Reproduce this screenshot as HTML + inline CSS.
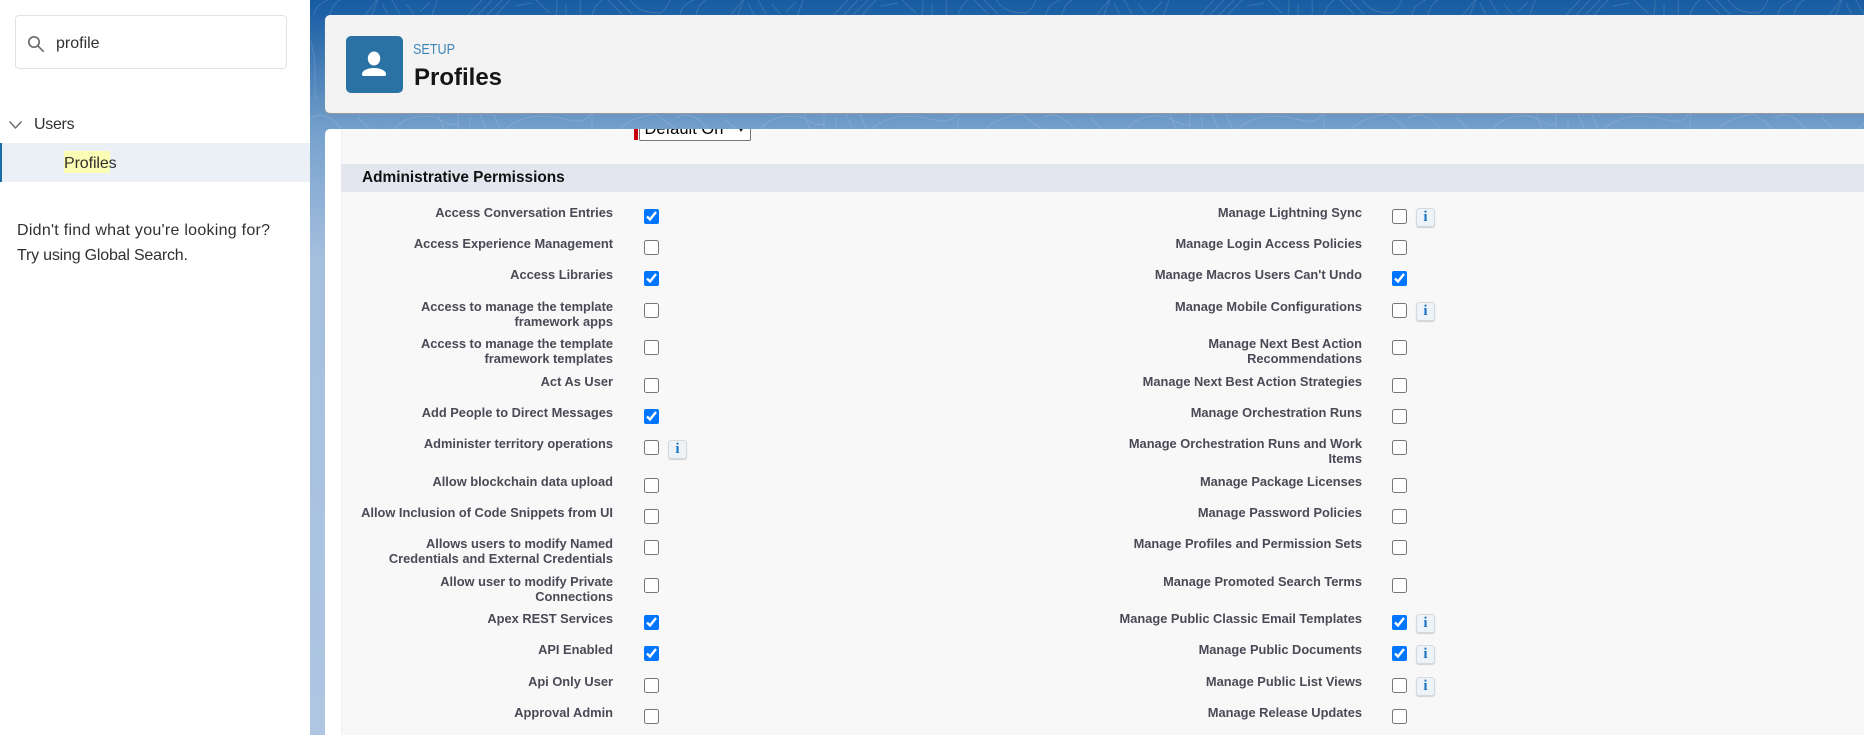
<!DOCTYPE html>
<html lang="en">
<head>
<meta charset="utf-8">
<title>Profiles</title>
<style>
html,body{margin:0;padding:0;width:1864px;height:735px;overflow:hidden;background:#fff}
body{position:relative;font-family:"Liberation Sans",Arial,sans-serif}
#bg{position:absolute;left:310px;top:0;width:1554px;height:735px;background:linear-gradient(#175ca2 0,#1f62a6 16px,#6a98c6 116px,#78a2cd 135px,#a5bfde 260px,#aec6e2 735px)}
#bg svg{position:absolute;left:0;top:0}
#side{position:absolute;left:0;top:0;width:310px;height:735px;background:#fff}
#search{position:absolute;left:15px;top:15px;width:270px;height:52px;border:1px solid #e2e2e2;border-radius:4px;background:#fff}
.st{position:absolute;white-space:nowrap;color:#303030;font-size:16px;line-height:20px}
#sel{position:absolute;left:0;top:143px;width:310px;height:39px;background:#ebf0f6}
#bar{position:absolute;left:0;top:143px;width:2px;height:39px;background:#1b6ba4}
#hl{position:absolute;left:64px;top:151px;width:46px;height:22px;background:#fbfdb4}
#head{position:absolute;left:325px;top:15px;width:1560px;height:98px;background:#f3f3f3;border-radius:5px;box-shadow:0 1px 1px #9a9a9a}
#ico{position:absolute;left:346px;top:36px;width:57px;height:57px;border-radius:5px;background:#2a72a3}
#card{position:absolute;left:325px;top:129px;width:1560px;height:620px;background:#fff;border-radius:5px 5px 0 0;overflow:hidden}
#panel{position:absolute;left:16px;top:0;width:1543px;height:620px;background:#f8f8f8;border-left:1px solid #f0f0f0}
#sect{position:absolute;left:16px;top:34.5px;width:1544px;height:28px;background:#e3e5ef}
#sectt{position:absolute;left:37px;top:39px;font-size:15.4px;font-weight:bold;line-height:20px;color:#111;white-space:nowrap}
#red{position:absolute;left:309px;top:0;width:4px;height:11px;background:#c8000a}
#dd{position:absolute;left:314px;top:-12px;width:110px;height:22px;background:#fff;border:1px solid #767676;border-radius:2px;overflow:hidden}
#ddt{position:absolute;left:4.500px;top:2px;font-size:16.500px;line-height:19px;color:#000;white-space:nowrap}
#dda{position:absolute;left:98px;top:9px;width:0;height:0;border-left:3.500px solid transparent;border-right:3.500px solid transparent;border-top:5px solid #111}
.l,.r{position:absolute;width:320px;text-align:right;font-size:12.850px;font-weight:bold;line-height:15px;color:#4a4a56;white-space:nowrap}
.l{left:293px}
.r{left:1042px}
input{position:absolute;margin:0;width:15px;height:15px}
.cl{left:644px}
.cr{left:1392px}
.i{position:absolute;width:17px;height:17px;border:1px solid #d6d9dc;border-radius:3px;background:#eef3f8;box-shadow:0 1px 1px #d0d0d0;text-align:center;font:bold 15px/17px "Liberation Serif",serif;color:#1b74c4}
</style>
</head>
<body>
<div id="bg">
<svg width="1554" height="135" viewBox="0 0 1554 135" fill="none">
<defs>
<pattern id="p" x="0" y="0" width="366" height="135" patternUnits="userSpaceOnUse">
<g stroke="#fff" stroke-opacity=".13" stroke-width="1" fill="none">
<path d="M4 15C5 8 10 3 18 0M20 15C22 8 24 3 30 0"/>
<path d="M55 15L67 0M62 15C64 8 66 4 68 0M72 3L78 15M82 0L90 14M96 4L104 14M110 12L120 2M122 15C124 8 126 4 127 0"/>
<path d="M158 15L172 0M168 15L182 0M177 15L192 0M186 15L200 0M205 6L222 3M226 0L240 13M246 15C247 9 247 4 247 0M256 15V4M270 15C271 9 270 3 270 0M282 15C284 8 288 3 292 0"/>
<path d="M298 0L312 14M308 0L322 14M320 0C326 8 332 13 350 13C355 10 358 5 360 0"/>
<path d="M0 118C10 113 20 114 32 129M48 118L60 129M85 129C92 118 110 114 125 117C135 122 142 127 148 124M128 113C130 120 132 124 134 129M148 114V129M160 117V127M170 114L176 128M184 115L190 128M196 129C210 116 230 114 250 118C265 122 275 124 281 113M282 113V129M310 129C318 120 330 117 345 114C352 118 358 124 366 129"/>
<path d="M0 40C8 60 3 80 6 100M8 150C12 170 4 190 10 220"/>
</g>
</pattern>
</defs>
<rect width="1554" height="135" fill="url(#p)"/>
</svg>
</div>

<div id="side">
<div id="search"></div>
<svg style="position:absolute;left:27px;top:35px" width="18" height="18" viewBox="0 0 18 18" fill="none" stroke="#6b6b6b" stroke-width="1.700"><circle cx="7" cy="7" r="5.200"/><path d="M10.800 10.800L16.200 16.200" stroke-linecap="round"/></svg>
<div class="st" style="left:56px;top:34px">profile</div>
<svg style="position:absolute;left:8px;top:120px" width="15" height="10" viewBox="0 0 15 10" fill="none" stroke="#6b6b6b" stroke-width="1.400"><path d="M1.500 1.500L7.500 8L13.500 1.500"/></svg>
<div class="st" style="left:34px;top:115px;letter-spacing:-.3px">Users</div>
<div id="sel"></div>
<div id="bar"></div>
<div id="hl"></div>
<div class="st" style="left:64px;top:154px;letter-spacing:-.1px">Profiles</div>
<div class="st" style="left:17px;top:221px;letter-spacing:.27px">Didn't find what you're looking for?</div>
<div class="st" style="left:17px;top:246px;letter-spacing:-.2px">Try using Global Search.</div>
</div>

<div id="head"></div>
<div id="ico">
<svg width="57" height="57" viewBox="0 0 57 57" fill="#fff"><ellipse cx="28" cy="22.500" rx="6.200" ry="7"/><path d="M16 38.500c0-1.200.2-2.200 1.200-3.100 2.500-2.300 6.300-3.400 10.800-3.400s8.300 1.100 10.800 3.400c1 .9 1.200 1.900 1.200 3.100 0 1-.6 1.500-1.500 1.500H17.500c-.9 0-1.500-.5-1.500-1.500z"/></svg>
</div>
<div style="position:absolute;left:413px;top:40px;font-size:15px;line-height:20px;color:#3f86b8;white-space:nowrap;transform:scaleX(.84);transform-origin:0 0">SETUP</div>
<div style="position:absolute;left:414px;top:63px;font-size:24px;font-weight:bold;line-height:30px;color:#151515;white-space:nowrap">Profiles</div>

<div id="card">
<div id="panel"></div>
<div id="red"></div>
<div id="dd"><div id="ddt">Default On</div><div id="dda"></div></div>
<div id="sect"></div>
<div id="sectt">Administrative Permissions</div>
</div>

<div class="l" style="top:205px">Access Conversation Entries</div><input class="cl" type="checkbox" checked style="top:209px">
<div class="l" style="top:236px">Access Experience Management</div><input class="cl" type="checkbox" style="top:240px">
<div class="l" style="top:267px">Access Libraries</div><input class="cl" type="checkbox" checked style="top:271px">
<div class="l" style="top:299px">Access to manage the template<br>framework apps</div><input class="cl" type="checkbox" style="top:303px">
<div class="l" style="top:336px">Access to manage the template<br>framework templates</div><input class="cl" type="checkbox" style="top:340px">
<div class="l" style="top:374px">Act As User</div><input class="cl" type="checkbox" style="top:378px">
<div class="l" style="top:405px">Add People to Direct Messages</div><input class="cl" type="checkbox" checked style="top:409px">
<div class="l" style="top:436px">Administer territory operations</div><input class="cl" type="checkbox" style="top:440px"><div class="i" style="left:668px;top:440px">i</div>
<div class="l" style="top:474px">Allow blockchain data upload</div><input class="cl" type="checkbox" style="top:478px">
<div class="l" style="top:505px">Allow Inclusion of Code Snippets from UI</div><input class="cl" type="checkbox" style="top:509px">
<div class="l" style="top:536px">Allows users to modify Named<br>Credentials and External Credentials</div><input class="cl" type="checkbox" style="top:540px">
<div class="l" style="top:574px">Allow user to modify Private<br>Connections</div><input class="cl" type="checkbox" style="top:578px">
<div class="l" style="top:611px">Apex REST Services</div><input class="cl" type="checkbox" checked style="top:615px">
<div class="l" style="top:642px">API Enabled</div><input class="cl" type="checkbox" checked style="top:646px">
<div class="l" style="top:674px">Api Only User</div><input class="cl" type="checkbox" style="top:678px">
<div class="l" style="top:705px">Approval Admin</div><input class="cl" type="checkbox" style="top:709px">

<div class="r" style="top:205px">Manage Lightning Sync</div><input class="cr" type="checkbox" style="top:209px"><div class="i" style="left:1416px;top:208px">i</div>
<div class="r" style="top:236px">Manage Login Access Policies</div><input class="cr" type="checkbox" style="top:240px">
<div class="r" style="top:267px">Manage Macros Users Can't Undo</div><input class="cr" type="checkbox" checked style="top:271px">
<div class="r" style="top:299px">Manage Mobile Configurations</div><input class="cr" type="checkbox" style="top:303px"><div class="i" style="left:1416px;top:302px">i</div>
<div class="r" style="top:336px">Manage Next Best Action<br>Recommendations</div><input class="cr" type="checkbox" style="top:340px">
<div class="r" style="top:374px">Manage Next Best Action Strategies</div><input class="cr" type="checkbox" style="top:378px">
<div class="r" style="top:405px">Manage Orchestration Runs</div><input class="cr" type="checkbox" style="top:409px">
<div class="r" style="top:436px">Manage Orchestration Runs and Work<br>Items</div><input class="cr" type="checkbox" style="top:440px">
<div class="r" style="top:474px">Manage Package Licenses</div><input class="cr" type="checkbox" style="top:478px">
<div class="r" style="top:505px">Manage Password Policies</div><input class="cr" type="checkbox" style="top:509px">
<div class="r" style="top:536px">Manage Profiles and Permission Sets</div><input class="cr" type="checkbox" style="top:540px">
<div class="r" style="top:574px">Manage Promoted Search Terms</div><input class="cr" type="checkbox" style="top:578px">
<div class="r" style="top:611px">Manage Public Classic Email Templates</div><input class="cr" type="checkbox" checked style="top:615px"><div class="i" style="left:1416px;top:614px">i</div>
<div class="r" style="top:642px">Manage Public Documents</div><input class="cr" type="checkbox" checked style="top:646px"><div class="i" style="left:1416px;top:645px">i</div>
<div class="r" style="top:674px">Manage Public List Views</div><input class="cr" type="checkbox" style="top:678px"><div class="i" style="left:1416px;top:677px">i</div>
<div class="r" style="top:705px">Manage Release Updates</div><input class="cr" type="checkbox" style="top:709px">
</body>
</html>
